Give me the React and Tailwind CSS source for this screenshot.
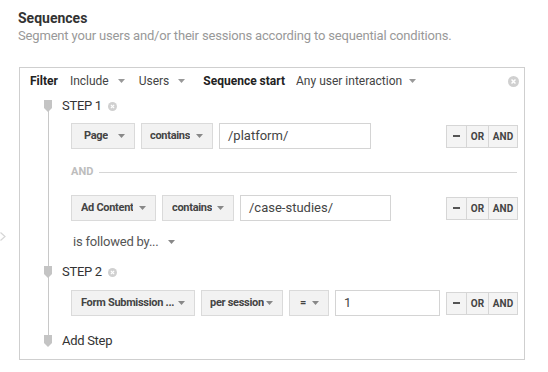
import React from 'react';

const Caret = ({ className = '' }) => (
  <svg width="7" height="4" viewBox="0 0 7 4" className={className}>
    <path d="M0 0h7L3.5 4z" fill="currentColor" />
  </svg>
);

const CloseDot = ({ size = 10 }) => (
  <svg width={size} height={size} viewBox="0 0 10 10">
    <circle cx="5" cy="5" r="5" fill="#d0d0d0" />
    <path d="M3.2 3.2l3.6 3.6M6.8 3.2L3.2 6.8" stroke="#fff" strokeWidth="1.3" />
  </svg>
);

const Marker = () => (
  <svg width="8" height="12" viewBox="0 0 8 12" className="relative z-10">
    <path d="M0 0h8v8L4 12 0 8z" fill="#c4c4c4" />
  </svg>
);

const Dropdown = ({ label, className }) => (
  <div className={`flex h-[26px] items-center justify-between border border-[#dadada] bg-[#f2f2f2] pr-[9px] ${className}`}>
    <span className="truncate text-[11px] font-bold tracking-[-0.3px] text-[#444]">{label}</span>
    <Caret className="shrink-0 text-[#888]" />
  </div>
);

const Field = ({ value, className }) => (
  <div className={`flex h-[26px] items-center border border-[#d4d4d4] bg-white pl-[8px] text-[13px] text-[#444] ${className}`}>
    {value}
  </div>
);

const Buttons = () => (
  <div className="flex h-[23px] border border-[#d6d6d6] bg-[#f4f4f4] text-[10px] font-bold text-[#444]">
    <div className="flex w-[20px] items-center justify-center border-r border-[#d6d6d6]">
      <span className="block h-[2px] w-[7px] bg-[#555]" />
    </div>
    <div className="flex w-[22px] items-center justify-center border-r border-[#d6d6d6]">OR</div>
    <div className="flex w-[28px] items-center justify-center">AND</div>
  </div>
);

const StepLabel = ({ children, close }) => (
  <div className="flex h-[18px] items-center">
    <div className="ml-[24px] flex w-[8px] justify-center">
      <Marker />
    </div>
    <span className="ml-[10px] text-[13px] tracking-[-0.3px] text-[#333]">{children}</span>
    {close && (
      <span className="ml-[6px] flex">
        <CloseDot size={9} />
      </span>
    )}
  </div>
);

const CondRow = ({ children }) => (
  <div className="flex items-center justify-between pl-[51px] pr-[6px]">
    <div className="flex items-center gap-[6px]">{children}</div>
    <Buttons />
  </div>
);

const App = () => {
  return (
    <div className="relative min-h-screen bg-white pl-[18px] pt-[9px] font-['Roboto',sans-serif]">
      <svg width="6" height="9" viewBox="0 0 6 9" className="absolute left-0 top-[232px]">
        <path d="M0.5 0.5L5 4.5 0.5 8.5" fill="none" stroke="#d6d6d6" strokeWidth="1.2" />
      </svg>

      <h1 className="text-[14px] font-bold leading-[18px] text-[#333]">Sequences</h1>
      <p className="text-[13px] leading-[18px] tracking-[-0.17px] text-[#999]">
        Segment your users and/or their sessions according to sequential conditions.
      </p>

      <div className="ml-[1px] mt-[22px] w-[506px] border border-[#cfcfcf] pb-[9px] pt-[3px]">
        {/* filter row */}
        <div className="flex h-[20px] items-center pl-[10px] pr-[5px] text-[12px] text-[#444]">
          <span className="font-bold text-[#222]">Filter</span>
          <span className="ml-[12px]">Include</span>
          <Caret className="ml-[9px] text-[#999]" />
          <span className="ml-[14px]">Users</span>
          <Caret className="ml-[9px] text-[#999]" />
          <span className="ml-[18px] font-bold text-[#222]">Sequence start</span>
          <span className="ml-[11px]">Any user interaction</span>
          <Caret className="ml-[7px] text-[#999]" />
          <span className="ml-auto flex">
            <CloseDot size={11} />
          </span>
        </div>

        <div className="relative mt-[6px]">
          <div className="absolute bottom-[9px] left-[28px] top-[9px] w-px bg-[#c8c8c8]" />

          <StepLabel close>STEP 1</StepLabel>

          <div className="mt-[8px]">
            <CondRow>
              <Dropdown label="Page" className="w-[64px] pl-[12px]" />
              <Dropdown label="contains" className="w-[72px] pl-[8px]" />
              <Field value="/platform/" className="w-[152px]" />
            </CondRow>
          </div>

          <div className="mt-[14px] flex h-[18px] items-center pl-[51px] pr-[7px]">
            <span className="text-[11px] font-bold text-[#bdbdbd]">AND</span>
            <div className="ml-[6px] h-px flex-1 bg-[#d6d6d6]" />
          </div>

          <div className="mt-[14px]">
            <CondRow>
              <Dropdown label="Ad Content" className="w-[85px] pl-[9px]" />
              <Dropdown label="contains" className="w-[72px] pl-[9px]" />
              <Field value="/case-studies/" className="w-[151px]" />
            </CondRow>
          </div>

          <div className="mt-[12px] flex h-[18px] items-center pl-[53px] text-[13px] tracking-[-0.2px] text-[#555]">
            <span>is followed by...</span>
            <Caret className="ml-[9px] text-[#888]" />
          </div>

          <div className="mt-[12px]">
            <StepLabel close>STEP 2</StepLabel>
          </div>

          <div className="mt-[9px]">
            <CondRow>
              <Dropdown label="Form Submission ..." className="w-[124px] pl-[9px]" />
              <Dropdown label="per session" className="w-[82px] pl-[8px]" />
              <Dropdown label="=" className="w-[40px] pl-[10px]" />
              <Field value="1" className="w-[105px]" />
            </CondRow>
          </div>

          <div className="mt-[16px]">
            <StepLabel>Add Step</StepLabel>
          </div>
        </div>
      </div>
    </div>
  );
};

export default App;
